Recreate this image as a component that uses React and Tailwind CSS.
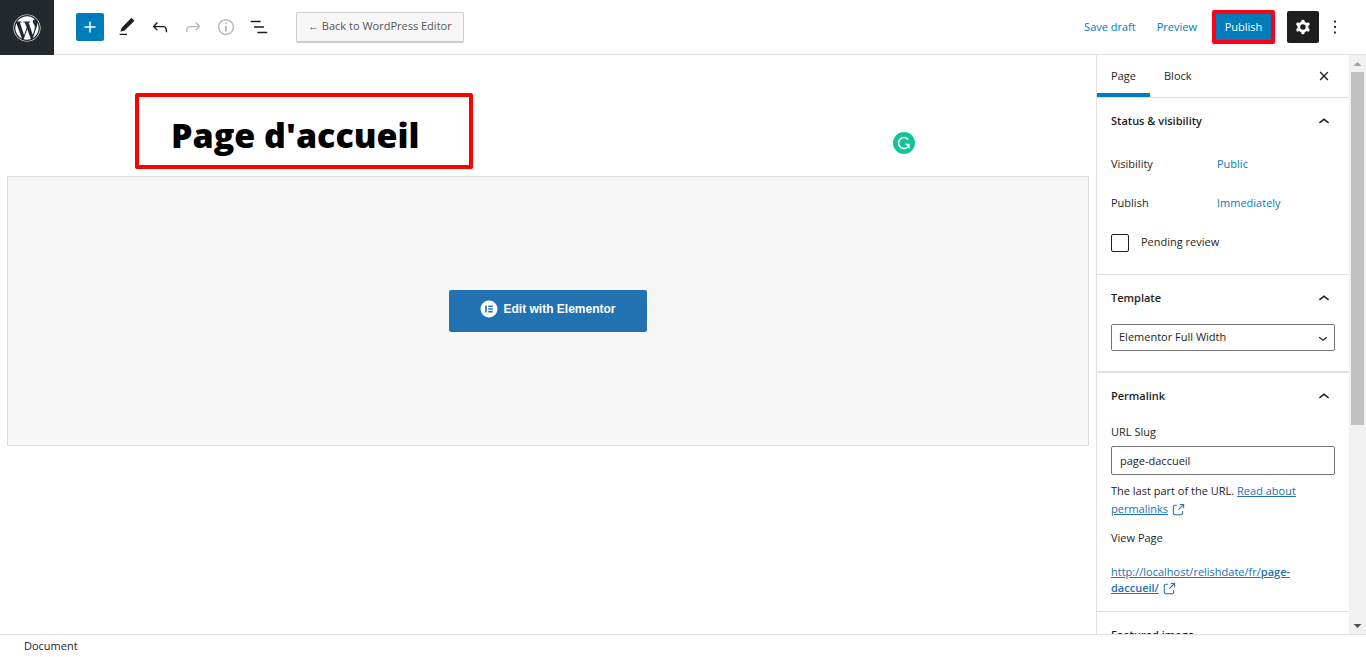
import { useState } from "react";
import { FaWordpress } from "react-icons/fa";

const ICONS = {
  plus: "M18 11.2h-5.2V6h-1.6v5.2H6v1.6h5.2V18h1.6v-5.2H18z",
  edit: "M20.1 5.1L16.9 2 6.2 12.7l-1.3 4.4 4.5-1.3L20.1 5.1zM4 20.8h8v-1.5H4v1.5z",
  undo: "M18.3 11.7c-.6-.6-1.4-.9-2.3-.9H6.7l2.9-3.3-1.1-1-4.5 5L8.5 16l1-1-2.7-2.7H16c.5 0 .9.2 1.3.5 1 1 1 3.4 1 4.5v.3h1.5v-.2c0-1.5 0-4.3-1.5-5.7z",
  redo: "M15.6 6.5l-1.1 1 2.9 3.3H8c-.9 0-1.7.3-2.3.9-1.4 1.5-1.4 4.2-1.4 5.6v.2h1.5v-.3c0-1.1 0-3.5 1-4.5.3-.3.7-.5 1.3-.5h9.2L14.5 15l1.1 1.1 4.6-4.6-4.6-5z",
  info: "M12 3.2c-4.8 0-8.8 3.9-8.8 8.8 0 4.8 3.9 8.8 8.8 8.8 4.8 0 8.8-3.9 8.8-8.8 0-4.8-4-8.8-8.8-8.8zm0 16c-4 0-7.2-3.3-7.2-7.2C4.8 8 8 4.8 12 4.8s7.2 3.3 7.2 7.2c0 4-3.2 7.2-7.2 7.2zM11 17h2v-6h-2v6zm0-8h2V7h-2v2z",
  list: "M13.8 5.2H3v1.5h10.8V5.2zm-3.6 12v1.5H21v-1.5H10.2zm7.2-6H6.6v1.5h10.8v-1.5z",
  close:
    "M12 13.06l3.712 3.713 1.061-1.06L13.061 12l3.712-3.712-1.06-1.06L12 10.938 8.288 7.227l-1.061 1.06L10.939 12l-3.712 3.712 1.06 1.061L12 13.061z",
  chevronUp: "M6.5 12.4L12 8l5.5 4.4-.9 1.2L12 10l-4.5 3.6-1-1.2z",
  chevronDown: "M17.5 11.6L12 16l-5.5-4.4.9-1.2L12 14l4.5-3.6 1 1.2z",
  more: "M13 19h-2v-2h2v2zm0-6h-2v-2h2v2zm0-6h-2V5h2v2z",
  external:
    "M18.2 17c0 .7-.6 1.2-1.2 1.2H7c-.7 0-1.2-.6-1.2-1.2V7c0-.7.6-1.2 1.2-1.2h3.2V4.2H7C5.5 4.2 4.2 5.5 4.2 7v10c0 1.5 1.2 2.8 2.8 2.8h10c1.5 0 2.8-1.2 2.8-2.8v-3.6h-1.5V17zM14.9 3v1.5h3.7l-6.4 6.4 1.1 1.1 6.4-6.4v3.7h1.5V3h-6.3z",
  cog: "M10.289 4.836A1 1 0 0111.275 4h1.306a1 1 0 01.987.836l.244 1.466c.787.26 1.503.679 2.108 1.218l1.393-.522a1 1 0 011.216.437l.653 1.13a1 1 0 01-.23 1.273l-1.148.944a6.025 6.025 0 010 2.435l1.149.946a1 1 0 01.23 1.272l-.653 1.13a1 1 0 01-1.216.437l-1.394-.522c-.605.54-1.32.958-2.108 1.218l-.244 1.466a1 1 0 01-.987.836h-1.306a1 1 0 01-.986-.836l-.244-1.466a5.995 5.995 0 01-2.108-1.218l-1.394.522a1 1 0 01-1.217-.436l-.653-1.131a1 1 0 01.23-1.272l1.149-.946a6.026 6.026 0 010-2.435l-1.148-.944a1 1 0 01-.23-1.272l.653-1.131a1 1 0 011.217-.437l1.393.522a5.994 5.994 0 012.108-1.218l.244-1.466zM14.929 12a3 3 0 11-6 0 3 3 0 016 0z",
};

function Icon({ name, size = 22, className }) {
  return (
    <svg viewBox="0 0 24 24" width={size} height={size} fill="currentColor" fillRule="evenodd" className={className} aria-hidden="true">
      <path d={ICONS[name]} />
    </svg>
  );
}

const tools = [
  { name: "edit", label: "Tools" },
  { name: "undo", label: "Undo" },
  { name: "redo", label: "Redo", disabled: true },
  { name: "info", label: "Details", disabled: true },
  { name: "list", label: "List View" },
];

function Header() {
  return (
    <header className="flex shrink-0 items-center h-[55px] border-b border-[#e0e0e0]">
      <a href="#dashboard" aria-label="View Pages" className="flex items-center justify-center self-stretch w-[54px] -mb-px bg-[#23282d] text-white">
        <FaWordpress size={28} />
      </a>

      <button aria-label="Add block" className="ml-[22px] flex items-center justify-center size-7 rounded-xs bg-[#007cba] text-white">
        <Icon name="plus" />
      </button>

      <div className="ml-1.5 flex">
        {tools.map((tool) => (
          <button
            key={tool.name}
            aria-label={tool.label}
            disabled={tool.disabled}
            className="flex items-center justify-center w-[33px] h-8 text-[#1e1e1e] disabled:text-[#bbbbbb]"
          >
            <Icon name={tool.name} />
          </button>
        ))}
      </div>

      <button className="ml-[21px] h-[31px] px-[11px] border border-b-2 border-[#cccccc] rounded-xs bg-[#f7f7f7] text-[#555555]">
        ← Back to WordPress Editor
      </button>

      <div className="ml-auto flex items-center pr-5">
        <button className="text-[#007cba]">Save draft</button>
        <button className="ml-[21px] text-[#007cba]">Preview</button>
        <button className="ml-[15px] w-[63px] h-[34px] border-4 border-[#ff0016] rounded-xs bg-[#007cba] text-white">
          Publish
        </button>
        <button aria-label="Settings" className="ml-3 flex items-center justify-center size-8 rounded-xs bg-[#1e1e1e] text-white">
          <Icon name="cog" />
        </button>
        <button aria-label="Options" className="ml-[5px] flex justify-center w-[22px] text-[#1e1e1e]">
          <Icon name="more" />
        </button>
      </div>
    </header>
  );
}

function Canvas() {
  return (
    <main className="flex-1 min-w-0 px-[7px] pt-[38px]">
      <div className="flex items-center justify-between pl-32 pr-[174px]">
        <h1 className="w-[338px] h-[76px] pl-8 pt-2 flex items-center border-4 border-[#ff0000] rounded-xs text-[34px] font-extrabold text-black">
          Page d'accueil
        </h1>
        <svg viewBox="0 0 22 22" width="22" height="22" className="mt-6" fill="none" aria-hidden="true">
          <circle cx="11" cy="11" r="11" fill="#15c39a" />
          <path d="M15.2 7.4A5.5 5.5 0 1 0 14.6 15.2" stroke="#ffffff" strokeWidth="1.5" />
          <path d="M11.6 11.8h5v5l-1.7-1.6-1.2-1.9z" fill="#ffffff" />
        </svg>
      </div>

      <section className="mt-[7px] h-[270px] flex items-center justify-center border border-[#dddddd] bg-[#f7f7f7]">
        <button className="flex items-center justify-center gap-[5px] w-[198px] h-[42px] pb-1 rounded-xs bg-[#2271b1] text-white font-['Liberation_Sans',sans-serif] text-xs font-bold">
          <svg viewBox="0 0 18 18" width="18" height="18" aria-hidden="true">
            <circle cx="9" cy="9" r="8.5" fill="#ffffff" />
            <path d="M5.2 5.5h1.6v7H5.2zM8.2 5.5h4.6V7H8.2zM8.2 8.3h4.6v1.4H8.2zM8.2 11h4.6v1.5H8.2z" fill="#2271b1" />
          </svg>
          Edit with Elementor
        </button>
      </section>
    </main>
  );
}

function Panel({ title, open = true, children }) {
  return (
    <section className="border-b border-[#e0e0e0] px-[14px]">
      <h2>
        <button className="flex items-center justify-between w-full h-[47px] font-semibold">
          {title}
          <Icon name={open ? "chevronUp" : "chevronDown"} />
        </button>
      </h2>
      {children}
    </section>
  );
}

function Sidebar() {
  const [template, setTemplate] = useState("full");
  const [slug, setSlug] = useState("page-daccueil");
  const [pending, setPending] = useState(false);

  return (
    <aside className="flex w-[270px] shrink-0 border-l border-[#e0e0e0] overflow-hidden">
      <div className="flex-1 min-w-0">
        <div className="flex items-stretch h-[43px] border-b border-[#e0e0e0] font-medium">
          <button className="w-[53px] pt-1 border-b-4 border-[#007cba]">Page</button>
          <button className="px-3.5">Block</button>
          <button aria-label="Close settings" className="ml-auto mr-3.5">
            <Icon name="close" />
          </button>
        </div>

        <Panel title="Status & visibility">
          <div className="flex items-center h-[39px]">
            <span className="w-[106px]">Visibility</span>
            <button className="text-[#007cba]">Public</button>
          </div>
          <div className="flex items-center h-[39px]">
            <span className="w-[106px]">Publish</span>
            <button className="text-[#007cba]">Immediately</button>
          </div>
          <label className="flex items-center gap-3 h-[39px] mb-3">
            <input
              type="checkbox"
              checked={pending}
              onChange={(e) => setPending(e.target.checked)}
              className="appearance-none size-[18px] border border-[#1e1e1e] rounded-xs bg-white checked:bg-[#007cba]"
            />
            Pending review
          </label>
        </Panel>

        <Panel title="Template">
          <div className="relative mt-0.5 mb-5">
            <select
              aria-label="Template"
              value={template}
              onChange={(e) => setTemplate(e.target.value)}
              className="appearance-none block w-full h-[27px] px-[7px] border border-[#757575] rounded-xs bg-white"
            >
              <option value="default">Default template</option>
              <option value="full">Elementor Full Width</option>
            </select>
            <Icon name="chevronDown" size={18} className="absolute right-[3px] top-[5px] pointer-events-none" />
          </div>
        </Panel>

        <div className="border-t border-[#e0e0e0]">
          <Panel title="Permalink">
            <label htmlFor="slug" className="block mt-[3px] leading-[18px]">URL Slug</label>
            <input
              id="slug"
              type="text"
              value={slug}
              onChange={(e) => setSlug(e.target.value)}
              className="block w-full h-[29px] mt-[5px] px-2 border border-[#757575] rounded-xs"
            />
            <p className="mt-[7px] leading-[18px]">
              The last part of the URL.{" "}
              <a href="#permalinks" className="text-[#2271b1] underline">
                Read about permalinks
              </a>
              <Icon name="external" size={16} className="inline ml-0.5 text-[#2271b1]" />
            </p>
            <p className="mt-[11px] leading-[18px]">View Page</p>
            <p className="mt-[17px] mb-[14px] leading-4 text-[#2271b1]">
              <a href="#view" className="underline">
                http://localhost/relishdate/fr/<span className="font-semibold">page-daccueil/</span>
              </a>
              <Icon name="external" size={16} className="inline ml-0.5" />
            </p>
          </Panel>
        </div>

        <Panel title="Featured image" open={false} />
      </div>

      {/* scrollbar */}
      <div className="flex flex-col items-center w-[17px] bg-[#f1f1f1]">
        <svg viewBox="0 0 17 17" width="17" height="17" className="shrink-0" aria-hidden="true">
          <path d="M4.5 11L8.5 7l4 4z" fill="#a3a3a3" />
        </svg>
        <div className="w-[13px] h-[353px] bg-[#c1c1c1]" />
        <svg viewBox="0 0 17 17" width="17" height="17" className="mt-auto shrink-0" aria-hidden="true">
          <path d="M4.5 7h8l-4 4z" fill="#505050" />
        </svg>
      </div>
    </aside>
  );
}

export default function App() {
  return (
    <div className="flex flex-col h-screen overflow-hidden bg-white text-[#1e1e1e] font-['Open_Sans',sans-serif] text-[11px]">
      <Header />
      <div className="flex flex-1 min-h-0">
        <Canvas />
        <Sidebar />
      </div>
      <footer className="flex shrink-0 items-center h-[23px] px-6 border-t border-[#e0e0e0]">Document</footer>
    </div>
  );
}
